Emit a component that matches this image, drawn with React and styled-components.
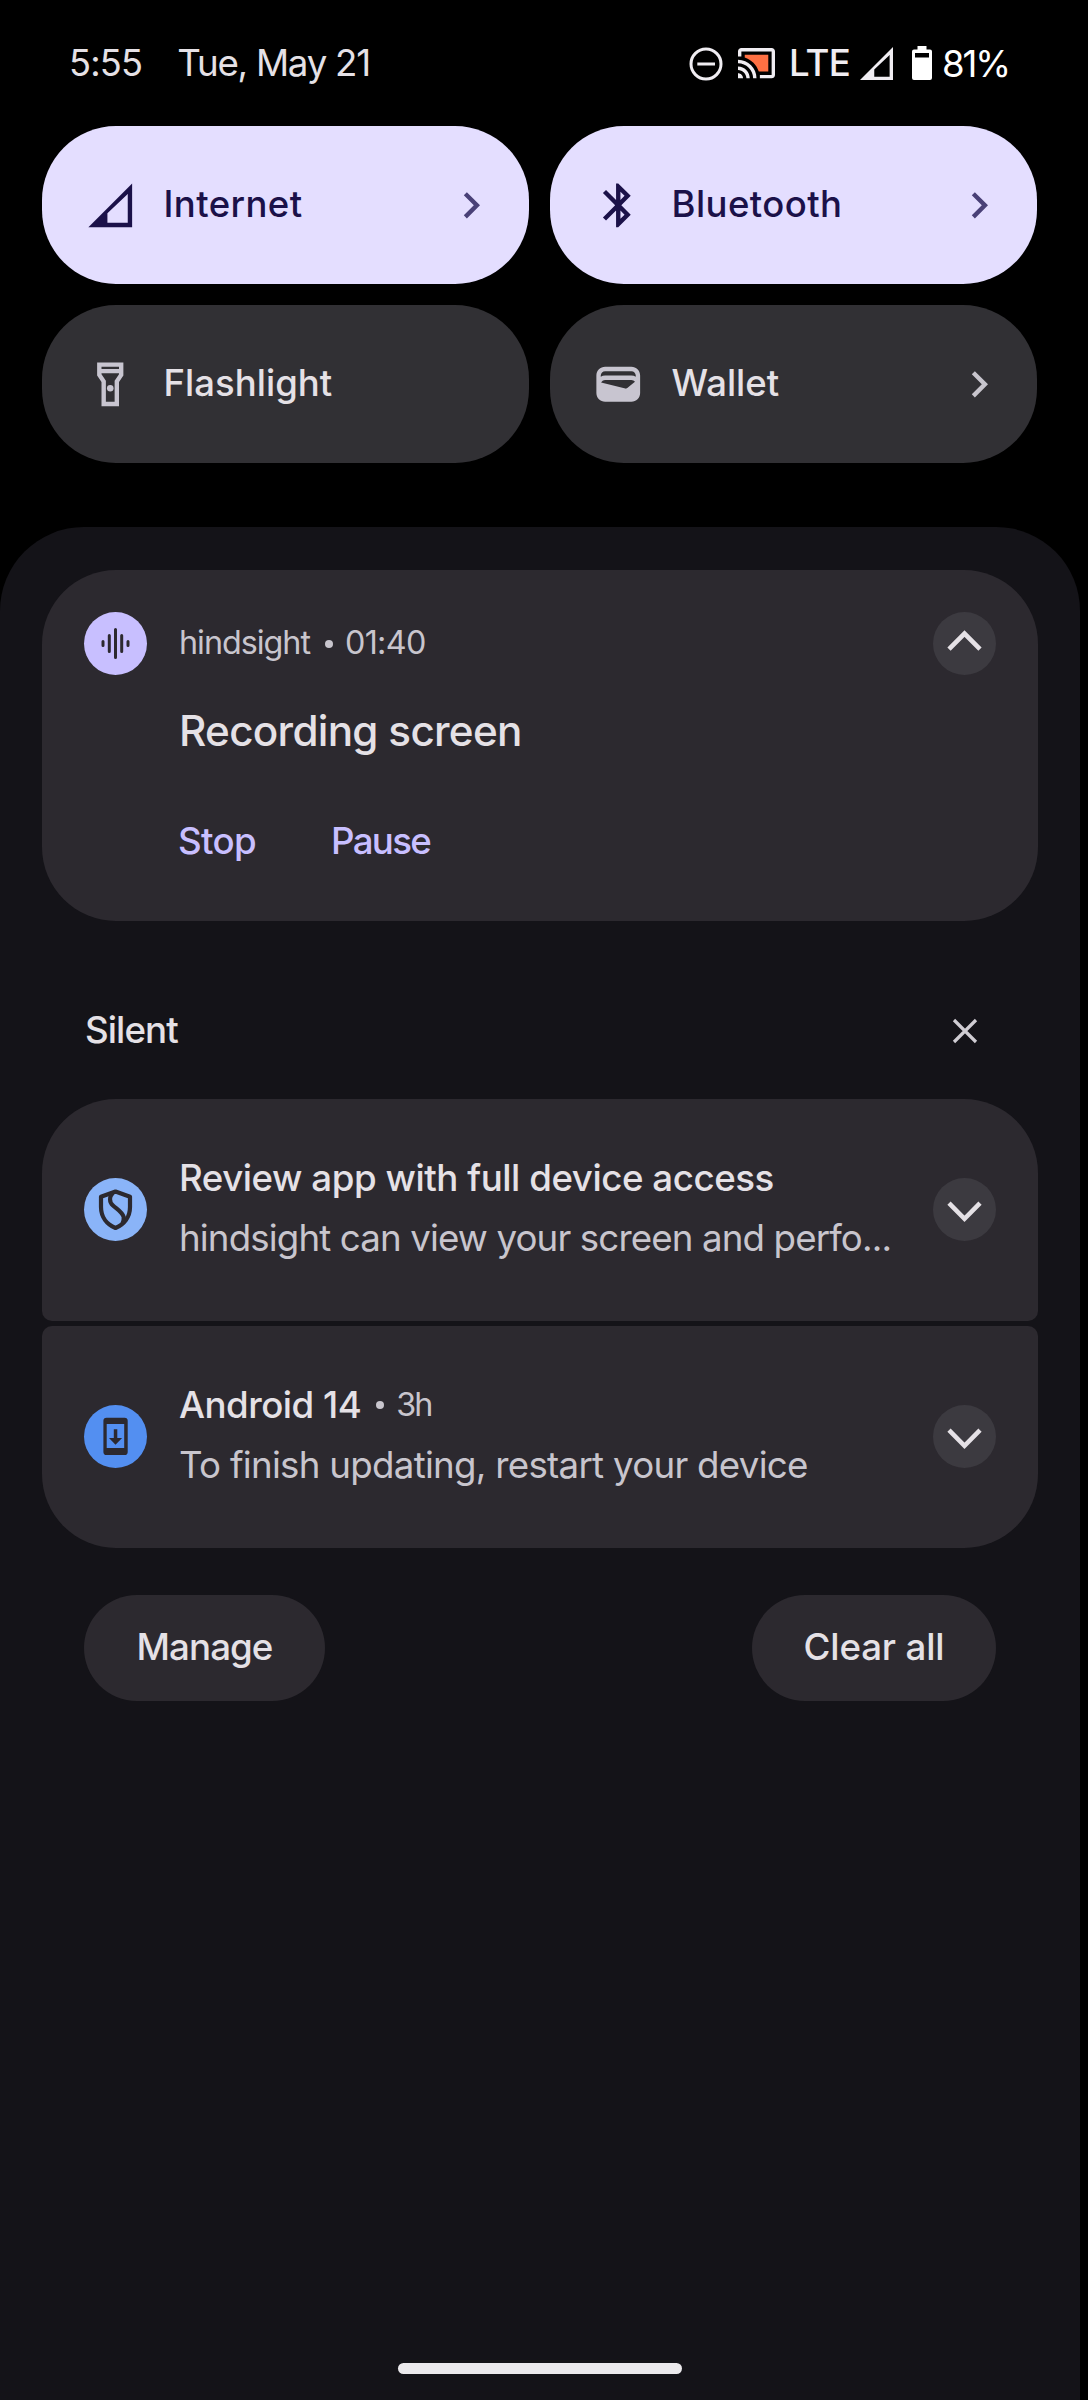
import React from "react";
import styled, { createGlobalStyle, css } from "styled-components";

const color = {
  text: "#e5e1e6",
  muted: "#c8c5cd",
  accent: "#c8bfff",
  accentTile: "#e4deff",
  onAccent: "#1b1149",
  tile: "#313034",
  shade: "#141318",
  card: "#2c292f",
  raised: "#3c3a40",
};

const GlobalStyle = createGlobalStyle`
  * { box-sizing: border-box; }
  body {
    margin: 0;
    background: #000;
    color: ${color.text};
    font-family: Inter, "Liberation Sans", sans-serif;
  }
  svg { display: block; flex: none; }
`;

const Screen = styled.div`
  width: 1088px;
  height: 2400px;
  display: flex;
  flex-direction: column;
  background: #000;
`;

const Text = styled.span`
  font-size: ${(p) => p.$size || 36.7}px;
  font-weight: ${(p) => p.$weight || 400};
  letter-spacing: ${(p) => p.$track || 0}px;
  line-height: 60px;
  color: ${(p) => p.$color || "inherit"};
  white-space: nowrap;
`;

/* Status bar */
const StatusBar = styled.header`
  height: 126px;
  display: flex;
  align-items: center;
  padding: 0 80px 0 69px;
`;
const DateText = styled(Text)`
  margin-left: 35px;
`;
const StatusIcons = styled.div`
  margin-left: auto;
  display: flex;
  align-items: center;
  color: #f0edf2;
`;
const Slot = styled.div`
  width: ${(p) => p.$w}px;
  margin-left: ${(p) => p.$gap || 0}px;
  padding-top: ${(p) => p.$drop || 0}px;
  display: flex;
  flex: none;
`;

/* Quick settings */
const QuickSettings = styled.section`
  display: grid;
  grid-template-columns: 487px 487px;
  gap: 21px;
  padding: 0 42px;
`;
const TileBox = styled.button`
  height: 158px;
  border: 0;
  border-radius: 74px;
  padding: 0 32px 0 42px;
  display: flex;
  align-items: center;
  font-family: inherit;
  text-align: left;
  background: ${color.tile};
  color: ${color.text};
  ${(p) => p.$active && css`
    background: ${color.accentTile};
    color: ${color.onAccent};
  `}
`;
const TileIcon = styled.span`
  margin-right: 27px;
  color: ${(p) => (p.$active ? color.onAccent : "#c8c5d0")};
`;
const TileLabel = styled(Text)`
  flex: 1;
  padding-bottom: 2px;
`;
const TileArrow = styled.span`
  color: ${(p) => (p.$active ? "#494077" : "#c8c5cd")};
`;

/* Notification shade */
const Shade = styled.main`
  width: 1080px;
  flex: 1;
  margin-top: 64px;
  padding: 43px 42px 26px;
  border-radius: 84px 84px 0 0;
  background: ${color.shade};
  display: flex;
  flex-direction: column;
`;
const Card = styled.article`
  width: 996px;
  background: ${color.card};
  padding: 0 42px;
`;
const RecordingCard = styled(Card)`
  height: 351px;
  padding-top: 42px;
  border-radius: 74px;
`;
const CardHeader = styled.div`
  height: 63px;
  display: flex;
  align-items: center;
`;
const AppName = styled(Text)`
  margin-left: 32px;
  padding-bottom: 2px;
`;
const Meta = styled(Text)`
  padding-bottom: 2px;
`;
const Dot = styled.span`
  width: 8px;
  height: 8px;
  border-radius: 50%;
  background: ${color.muted};
  margin: 1px ${(p) => p.$right}px 0 ${(p) => p.$left}px;
`;
const Avatar = styled.div`
  width: 63px;
  height: 63px;
  flex: none;
  border-radius: 50%;
  background: ${(p) => p.$bg};
  color: ${color.card};
`;
const ExpandButton = styled.button`
  width: 63px;
  height: 63px;
  flex: none;
  margin-left: auto;
  padding: 0;
  border: 0;
  border-radius: 50%;
  background: ${color.raised};
  color: ${color.text};
`;
const RecordingBody = styled.div`
  display: flex;
  flex-direction: column;
  padding: 26px 0 0 95px;
`;
const Actions = styled.div`
  display: flex;
  gap: 75px;
  margin: 50px 0 0 -1px;
`;

const SectionHeader = styled.div`
  height: 178px;
  padding: 39px 31px 0 43px;
  display: flex;
  align-items: center;
  justify-content: space-between;
`;
const CloseIcon = styled.svg`
  margin-top: 3px;
`;

const List = styled.div`
  display: flex;
  flex-direction: column;
  gap: 5px;
`;
const ItemCard = styled(Card)`
  height: 222px;
  display: flex;
  align-items: center;
  padding-bottom: 1px;
  border-radius: ${(p) => (p.$first ? "74px 74px 10px 10px" : "10px 10px 74px 74px")};
`;
const ItemText = styled.div`
  margin-left: 32px;
  padding-bottom: 4px;
  display: flex;
  flex-direction: column;
`;
const TitleLine = styled.div`
  height: 60px;
  display: flex;
  align-items: center;
`;

const Footer = styled.div`
  margin-top: 47px;
  padding: 0 42px;
  display: flex;
  justify-content: space-between;
`;
const PillButton = styled.button`
  width: ${(p) => p.$w}px;
  height: 106px;
  border: 0;
  border-radius: 53px;
  padding: 0 0 3px;
  background: ${color.card};
  color: ${color.text};
  font-family: inherit;
`;
const NavHandle = styled.div`
  width: 284px;
  height: 11px;
  margin: auto auto 0;
  border-radius: 6px;
  background: #ebe9ec;
`;

const Signal = ({ w, h }) => (
  <svg width={w} height={h} viewBox="0 0 44 44" preserveAspectRatio="none">
    <path fill="currentColor" fillRule="evenodd" d="M0 44L44 0V44ZM19 39.5H39.5V10.7L19 30Z" />
  </svg>
);
const Material = ({ d, size = 52.5, children }) => (
  <svg width={size} height={size} viewBox="0 0 24 24">
    <path fill="currentColor" fillRule="evenodd" d={d} />
    {children}
  </svg>
);
const SIGNAL = "M2 22L22 2V22ZM10.7 20H20V6.83L10.7 15.7Z";
const BLUETOOTH = "M17.71 7.71L12 2h-1v7.59L6.41 5 5 6.41 10.59 12 5 17.59 6.41 19 11 14.41V22h1l5.71-5.71-4.3-4.29 4.3-4.29zM13 5.83l1.88 1.88L13 9.59V5.83zm1.88 10.46L13 18.17v-3.76l1.88 1.88z";
const FLASHLIGHT = "M6 2v6l2 3v11h8V11l2-3V2H6zM16 4v1H8V4h8zM14 10.4V20h-4v-9.6l-2-3V7h8v.4l-2 3z";
const WALLET = "M18 4H6C3.79 4 2 5.79 2 8v8c0 2.21 1.79 4 4 4h12c2.21 0 4-1.79 4-4V8c0-2.21-1.79-4-4-4zm-1.86 9.77c-.24.2-.57.28-.88.2L4.15 11.25C4.45 10.52 5.16 10 6 10h12c.67 0 1.26.34 1.63.84l-3.49 2.93zM6 6h12c1.1 0 2 .9 2 2v.55c-.59-.34-1.27-.55-2-.55H6c-.73 0-1.41.21-2 .55V8c0-1.1.9-2 2-2z";
const CHEVRON = "M10 6L8.59 7.41 13.17 12l-4.58 4.59L10 18l6-6z";

const Tile = ({ icon, label, track, active, arrow }) => (
  <TileBox $active={active}>
    <TileIcon $active={active}>{icon}</TileIcon>
    <TileLabel $size={36.5} $weight={500} $track={track}>{label}</TileLabel>
    {arrow && <TileArrow $active={active}><Material d={CHEVRON} /></TileArrow>}
  </TileBox>
);

const Expand = ({ up }) => (
  <ExpandButton aria-label={up ? "Collapse" : "Expand"}>
    <svg width="63" height="63" viewBox="0 0 63 63" fill="none" stroke="currentColor" strokeWidth="4.6">
      <path d={up ? "M16 37.2L31.5 21.6L47 37.2" : "M16 25.2L31.5 40.8L47 25.2"} />
    </svg>
  </ExpandButton>
);

export default function App() {
  return (
    <>
      <GlobalStyle />
      <Screen>
        <StatusBar>
          <Text $size={36.2} $track={-0.79}>5:55</Text>
          <DateText $track={-1.25}>Tue, May 21</DateText>
          <StatusIcons>
            <Slot $w={34} $drop={1}>
              <svg width="34" height="34" viewBox="0 0 34 34" fill="none" stroke="currentColor" strokeWidth="3">
                <circle cx="17" cy="17" r="15" />
                <path d="M8.3 17H26" />
              </svg>
            </Slot>
            <Slot $w={37} $gap={15.5} $drop={1}>
              <svg width="37" height="30.3" viewBox="1 3 22 18">
                <path fill="currentColor" d="M1 18v3h3c0-1.66-1.34-3-3-3zm0-4v2c2.76 0 5 2.24 5 5h2c0-3.87-3.13-7-7-7zM1 10v2c4.97 0 9 4.03 9 9h2c0-6.08-4.93-11-11-11zm20-7H3c-1.1 0-2 .9-2 2v3h2V5h18v14h-7v2h7c1.1 0 2-.9 2-2V5c0-1.1-.9-2-2-2z" />
                <path fill="#ff7043" d="M19 7H5v1.63c3.96 1.28 7.09 4.41 8.37 8.37H19z" />
              </svg>
            </Slot>
            <Slot $w={62} $gap={14}><Text $size={36.6} $weight={500} $track={-0.71}>LTE</Text></Slot>
            <Slot $w={33} $gap={9}><Signal w={33} h={33} /></Slot>
            <Slot $w={20} $gap={19}>
              <svg width="20" height="34" viewBox="0 0 20 34">
                <path fill="#fff" fillRule="evenodd" d="M5.5 0h9v3.5H18a2 2 0 0 1 2 2V32a2 2 0 0 1-2 2H2a2 2 0 0 1-2-2V5.5a2 2 0 0 1 2-2h3.5zM3 7v4.5h14V7z" />
              </svg>
            </Slot>
            <Slot $w={66} $gap={10} $drop={2}><Text $size={36.5} $track={-2.1} $color="#fff">81%</Text></Slot>
          </StatusIcons>
        </StatusBar>

        <QuickSettings>
          <Tile active arrow label="Internet" track={0.4} icon={<Material d={SIGNAL} />} />
          <Tile active arrow label="Bluetooth" track={0.42} icon={<Material d={BLUETOOTH} />} />
          <Tile
            label="Flashlight"
            track={0.03}
            icon={<Material d={FLASHLIGHT}><circle cx="12" cy="13.8" r="1.5" fill="currentColor" /></Material>}
          />
          <Tile arrow label="Wallet" icon={<Material d={WALLET} />} />
        </QuickSettings>

        <Shade>
          <RecordingCard>
            <CardHeader>
              <Avatar $bg={color.accent}>
                <svg width="63" height="63" viewBox="0 0 63 63" fill="none" stroke="currentColor" strokeWidth="3" strokeLinecap="round">
                  <path d="M19 29.5V33.5M25.3 23.5V39.5M31.5 17.5V45.5M37.7 23.5V39.5M44 29.5V33.5" />
                </svg>
              </Avatar>
              <AppName $size={32.3} $track={-1.02} $color={color.muted}>hindsight</AppName>
              <Dot $left={15} $right={12} />
              <Meta $size={32.3} $track={-0.68} $color={color.muted}>01:40</Meta>
              <Expand up />
            </CardHeader>
            <RecordingBody>
              <Text $size={42.2} $weight={500} $track={-0.7}>Recording screen</Text>
              <Actions>
                <Text $weight={500} $track={-0.68} $color={color.accent}>Stop</Text>
                <Text $weight={500} $track={-1.7} $color={color.accent}>Pause</Text>
              </Actions>
            </RecordingBody>
          </RecordingCard>

          <SectionHeader>
            <Text $weight={500} $track={-0.92}>Silent</Text>
            <CloseIcon width="84" height="26" viewBox="0 0 84 26" fill="none" stroke="#d0cdd3" strokeWidth="3.2">
              <path d="M31 2L53 24M53 2L31 24" />
            </CloseIcon>
          </SectionHeader>

          <List>
            <ItemCard $first>
              <Avatar $bg="#8ab4f8">
                <svg width="63" height="63" viewBox="0 0 63 63" fill="none" stroke="currentColor" strokeWidth="4.2" strokeLinejoin="round">
                  <path d="M31.5 13.5L46 18.7V29C46 39 40 46.5 31.5 50C23 46.5 17 39 17 29V18.7Z" />
                  <path d="M29 14.5C25 19 25.2 24 29 27.5C33 31.2 38.5 34 39.7 39C40 41 39.5 43 38.5 45.5" />
                </svg>
              </Avatar>
              <ItemText>
                <Text $weight={500} $track={-0.46}>Review app with full device access</Text>
                <Text $track={-0.87} $color={color.muted}>hindsight can view your screen and perfo...</Text>
              </ItemText>
              <Expand />
            </ItemCard>
            <ItemCard>
              <Avatar $bg="#538ff1">
                <svg width="63" height="63" viewBox="0 0 63 63" fill="currentColor">
                  <path fillRule="evenodd" d="M22.5 12.7H40.6A3.1 3.1 0 0 1 43.7 15.8V47A3.1 3.1 0 0 1 40.6 50.1H22.5A3.1 3.1 0 0 1 19.4 47V15.8A3.1 3.1 0 0 1 22.5 12.7ZM22.7 19V43.1H40.2V19Z" />
                  <path d="M29.8 24.3H33.3V33H38.1L31.5 39.8L25 33H29.8Z" />
                </svg>
              </Avatar>
              <ItemText>
                <TitleLine>
                  <Text $weight={500} $track={-0.52}>Android 14</Text>
                  <Dot $left={15} $right={12} />
                  <Text $size={32.3} $track={-2} $color={color.muted}>3h</Text>
                </TitleLine>
                <Text $track={-0.72} $color={color.muted}>To finish updating, restart your device</Text>
              </ItemText>
              <Expand />
            </ItemCard>
          </List>

          <Footer>
            <PillButton $w={241}><Text $weight={500} $track={-0.95}>Manage</Text></PillButton>
            <PillButton $w={244}><Text $weight={500} $track={-0.15}>Clear all</Text></PillButton>
          </Footer>
          <NavHandle />
        </Shade>
      </Screen>
    </>
  );
}
